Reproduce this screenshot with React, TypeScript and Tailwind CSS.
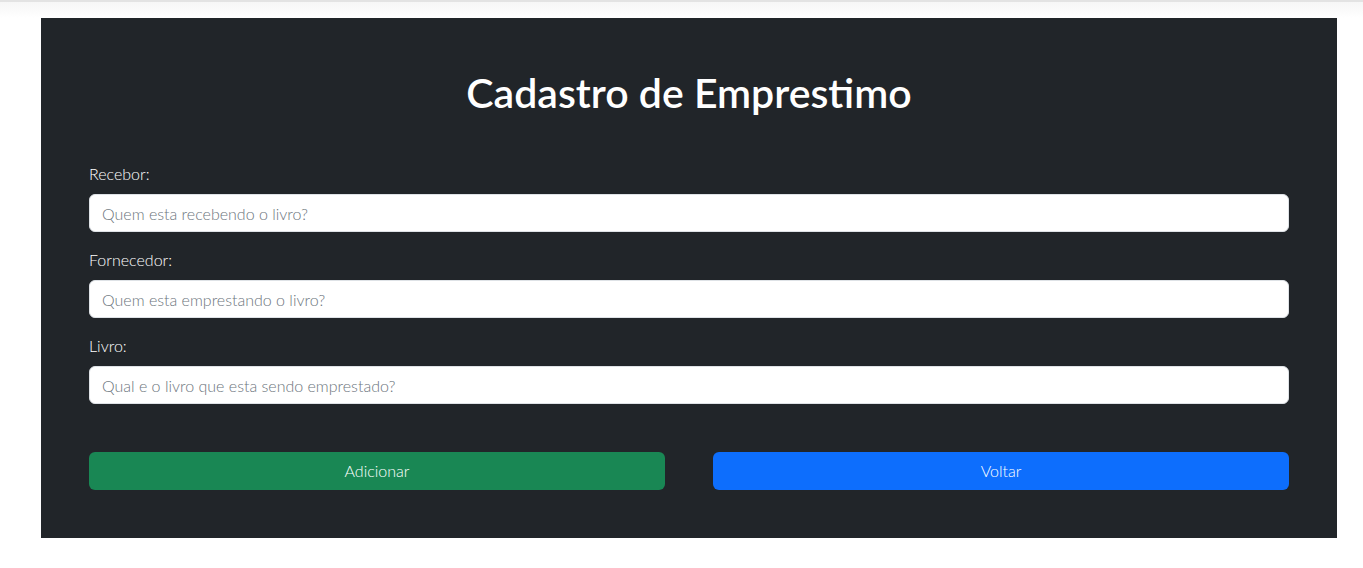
export default function App() {
  const fields = [
    { label: "Recebor:", placeholder: "Quem esta recebendo o livro?" },
    { label: "Fornecedor:", placeholder: "Quem esta emprestando o livro?" },
    { label: "Livro:", placeholder: "Qual e o livro que esta sendo emprestado?" },
  ];

  return (
    <div className="min-h-[568px] w-[1363px] bg-white font-['Lato',sans-serif] font-light">
      <div className="h-[18px] border-t-2 border-[#e3e3e3] bg-gradient-to-b from-[#f6f6f6] to-white" />
      <div className="ml-[41px] w-[1296px] bg-[#212529] px-12 pb-12 pt-[51px]">
        <h1 className="text-center text-[41px] font-semibold leading-[48px] text-white">
          Cadastro de Emprestimo
        </h1>
        <form className="mt-[45px]">
          {fields.map((f) => (
            <div key={f.label} className="mb-4">
              <label className="mb-2 block text-base leading-6 text-white">{f.label}</label>
              <input
                type="text"
                placeholder={f.placeholder}
                className="block h-[38px] w-full rounded-md border border-[#dee2e6] bg-white px-3 text-base font-light text-[#212529] placeholder:text-[#6c757d] outline-none"
              />
            </div>
          ))}
          <div className="mt-12 grid grid-cols-2 gap-12">
            <button
              type="button"
              className="h-[38px] rounded-md bg-[#198754] text-base font-light text-white"
            >
              Adicionar
            </button>
            <button
              type="button"
              className="h-[38px] rounded-md bg-[#0d6efd] text-base font-light text-white"
            >
              Voltar
            </button>
          </div>
        </form>
      </div>
    </div>
  );
}
